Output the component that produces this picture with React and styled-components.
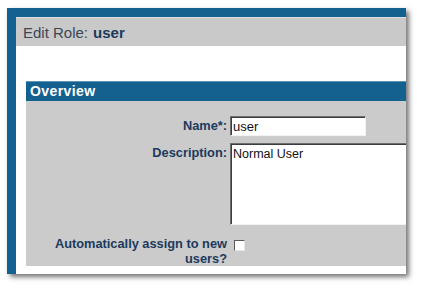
import React from 'react';
import styled, { createGlobalStyle } from 'styled-components';

const blue = '#14608e';
const labelColor = '#1c3a5c';

const GlobalStyle = createGlobalStyle`
  html, body {
    margin: 0;
    padding: 0;
    background: #ffffff;
    font-family: "Liberation Sans", Arial, sans-serif;
  }
`;

const Page = styled.div`
  width: 421px;
  height: 288px;
  padding: 8px 0 0 7px;
  box-sizing: border-box;
`;

const Frame = styled.div`
  width: 399px;
  height: 266px;
  box-sizing: border-box;
  border-left: 9px solid ${blue};
  border-top: 9px solid ${blue};
  background: #ffffff;
  box-shadow: 3px 3px 5px rgba(0, 0, 0, 0.55);
  overflow: hidden;
  display: flex;
  flex-direction: column;
`;

const Header = styled.div`
  height: 29px;
  flex-shrink: 0;
  background: #c9c9c9;
  border-top: 1px solid #d8dde2;
  box-sizing: border-box;
  display: flex;
  align-items: center;
  padding: 1px 0 0 7px;
  font-size: 15px;
  color: #3b4654;
`;

const RoleName = styled.b`
  color: ${labelColor};
  margin-left: 5px;
`;

const Body = styled.div`
  flex: 1;
  padding: 35px 0 8px 10px;
  display: flex;
  flex-direction: column;
`;

const SectionTitle = styled.div`
  height: 20px;
  background: ${blue};
  border-top: 1px solid #5d93b5;
  box-sizing: border-box;
  color: #ffffff;
  font-weight: bold;
  font-size: 14px;
  letter-spacing: 0.4px;
  padding-left: 4px;
  line-height: 18px;
`;

const Form = styled.div`
  flex: 1;
  background: #cbcbcb;
  display: grid;
  grid-template-columns: 201px 1fr;
  column-gap: 3px;
  row-gap: 7px;
  align-content: start;
  padding-top: 15px;
`;

const Label = styled.label`
  text-align: right;
  font-weight: bold;
  font-size: 12.8px;
  line-height: 15px;
  color: ${labelColor};
  padding-top: ${(p) => p.$top || 0}px;
`;

const TextInput = styled.input`
  width: 136px;
  height: 20px;
  box-sizing: border-box;
  margin: 0;
  padding: 1px 2px 0;
  border: 1px solid;
  border-color: #6e6e6e #f2f2f2 #f2f2f2 #6e6e6e;
  box-shadow: inset 1px 1px 0 #3c3c3c;
  background: #ffffff;
  font-family: "Liberation Sans", Arial, sans-serif;
  font-size: 13px;
  color: #111;
  outline: none;
`;

const TextArea = styled.textarea`
  width: 200px;
  height: 82px;
  box-sizing: border-box;
  margin: 0;
  padding: 3px 2px;
  border: 1px solid;
  border-color: #6e6e6e #f2f2f2 #f2f2f2 #6e6e6e;
  box-shadow: inset 1px 1px 0 #3c3c3c;
  background: #ffffff;
  font-family: "Liberation Sans", Arial, sans-serif;
  font-size: 12.5px;
  color: #111;
  resize: none;
  outline: none;
`;

const CheckBox = styled.input`
  appearance: none;
  width: 11px;
  height: 11px;
  margin: 4px 0 0 4px;
  box-sizing: border-box;
  background: #ffffff;
  border: 1px solid;
  border-color: #5a5a5a #e6e6e6 #e6e6e6 #5a5a5a;
`;

export default function App() {
  return (
    <Page>
      <GlobalStyle />
      <Frame>
        <Header>
          Edit Role:<RoleName>user</RoleName>
        </Header>
        <Body>
          <SectionTitle>Overview</SectionTitle>
          <Form>
            <Label $top={2}>Name*:</Label>
            <div>
              <TextInput defaultValue="user" />
            </div>
            <Label $top={2}>Description:</Label>
            <div>
              <TextArea defaultValue="Normal User" />
            </div>
            <Label>Automatically assign to new users?</Label>
            <div>
              <CheckBox type="checkbox" />
            </div>
          </Form>
        </Body>
      </Frame>
    </Page>
  );
}
